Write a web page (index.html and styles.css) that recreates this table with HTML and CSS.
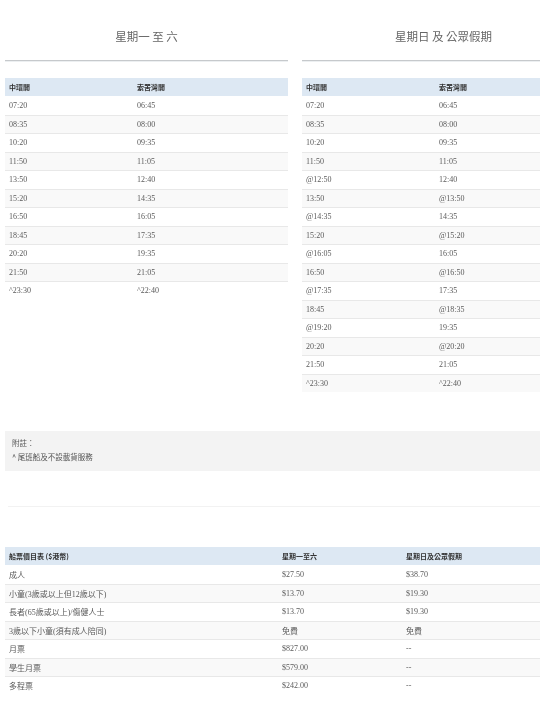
FILE: index.html
```html
<!DOCTYPE html>
<html lang="zh-Hant">
<head>
<meta charset="utf-8">
<title>船期表</title>
<link rel="stylesheet" href="styles.css">
</head>
<body>
<div class="frame">
<div class="page">
  <div class="schedules">
    <section class="sched">
      <h2 class="sched-title"><span>星期一 至 六</span></h2>
      <div class="tbl tbl-left">
        <div class="row head"><span class="c1">中環開</span><span>索罟灣開</span></div>
        <div class="row"><span class="c1">07:20</span><span>06:45</span></div>
        <div class="row"><span class="c1">08:35</span><span>08:00</span></div>
        <div class="row"><span class="c1">10:20</span><span>09:35</span></div>
        <div class="row"><span class="c1">11:50</span><span>11:05</span></div>
        <div class="row"><span class="c1">13:50</span><span>12:40</span></div>
        <div class="row"><span class="c1">15:20</span><span>14:35</span></div>
        <div class="row"><span class="c1">16:50</span><span>16:05</span></div>
        <div class="row"><span class="c1">18:45</span><span>17:35</span></div>
        <div class="row"><span class="c1">20:20</span><span>19:35</span></div>
        <div class="row"><span class="c1">21:50</span><span>21:05</span></div>
        <div class="row"><span class="c1">^23:30</span><span>^22:40</span></div>
      </div>
    </section>
    <section class="sched">
      <h2 class="sched-title"><span>星期日 及 公眾假期</span></h2>
      <div class="tbl tbl-right">
        <div class="row head"><span class="c1">中環開</span><span>索罟灣開</span></div>
        <div class="row"><span class="c1">07:20</span><span>06:45</span></div>
        <div class="row"><span class="c1">08:35</span><span>08:00</span></div>
        <div class="row"><span class="c1">10:20</span><span>09:35</span></div>
        <div class="row"><span class="c1">11:50</span><span>11:05</span></div>
        <div class="row"><span class="c1">@12:50</span><span>12:40</span></div>
        <div class="row"><span class="c1">13:50</span><span>@13:50</span></div>
        <div class="row"><span class="c1">@14:35</span><span>14:35</span></div>
        <div class="row"><span class="c1">15:20</span><span>@15:20</span></div>
        <div class="row"><span class="c1">@16:05</span><span>16:05</span></div>
        <div class="row"><span class="c1">16:50</span><span>@16:50</span></div>
        <div class="row"><span class="c1">@17:35</span><span>17:35</span></div>
        <div class="row"><span class="c1">18:45</span><span>@18:35</span></div>
        <div class="row"><span class="c1">@19:20</span><span>19:35</span></div>
        <div class="row"><span class="c1">20:20</span><span>@20:20</span></div>
        <div class="row"><span class="c1">21:50</span><span>21:05</span></div>
        <div class="row"><span class="c1">^23:30</span><span>^22:40</span></div>
      </div>
    </section>
  </div>

  <div class="note">
    <p>附註：</p>
    <p>^ 尾班船及不設載貨服務</p>
  </div>

  <hr class="divider">

  <div class="tbl fares">
    <div class="row head"><span class="f1">船票價目表 ($港幣)</span><span class="f2">星期一至六</span><span>星期日及公眾假期</span></div>
    <div class="row"><span class="f1">成人</span><span class="f2">$27.50</span><span>$38.70</span></div>
    <div class="row"><span class="f1">小童(3歲或以上但12歲以下)</span><span class="f2">$13.70</span><span>$19.30</span></div>
    <div class="row"><span class="f1">長者(65歲或以上)/傷健人士</span><span class="f2">$13.70</span><span>$19.30</span></div>
    <div class="row"><span class="f1">3歲以下小童(須有成人陪同)</span><span class="f2">免費</span><span>免費</span></div>
    <div class="row"><span class="f1">月票</span><span class="f2">$827.00</span><span>--</span></div>
    <div class="row"><span class="f1">學生月票</span><span class="f2">$579.00</span><span>--</span></div>
    <div class="row"><span class="f1">多程票</span><span class="f2">$242.00</span><span>--</span></div>
  </div>
</div>
</div>
</body>
</html>
```

FILE: styles.css
```css
html, body {
  margin: 0;
  padding: 0;
  background: #fff;
}

body {
  font-family: "Liberation Serif", "Noto Sans CJK TC", serif;
  color: #555;
}

.frame {
  width: 540px;
  overflow: hidden;
}

.page {
  width: 581px;
  margin-left: 5px;
}

.schedules {
  display: grid;
  grid-template-columns: 283px 283px;
  column-gap: 14px;
  align-items: start;
}

.sched-title {
  margin: 0;
  padding: 28px 0 16px;
  font-family: "Noto Sans CJK TC", sans-serif;
  font-weight: 400;
  font-size: 11.5px;
  line-height: 16px;
  color: #666;
  text-align: center;
  border-bottom: 1px solid #c6c9cc;
  box-shadow: 0 1px 0 #eceff1;
}

.sched-title span {
  display: inline-block;
  filter: grayscale(1);
}

.tbl {
  margin-top: 17px;
  font-size: 8px;
}

.row {
  display: flex;
  align-items: center;
  height: 18.5px;
  box-sizing: border-box;
  border-top: 1px solid #e8e8e8;
  padding-left: 4px;
  color: #5a5a5a;
  white-space: nowrap;
}

.row > span,
.note p {
  display: block;
  filter: grayscale(1);
}

.row:nth-child(odd) {
  background: #f9f9f9;
}

.row.head {
  height: 18px;
  border-top: 0;
  background: #dde8f3;
  color: #333;
  font-family: "Noto Sans CJK TC", sans-serif;
  font-weight: 700;
  font-size: 7px;
}

.row.head + .row {
  border-top: 0;
}

.tbl-left .c1 {
  width: 128px;
}

.tbl-right .c1 {
  width: 133px;
}

.note {
  margin-top: 39px;
  height: 40px;
  box-sizing: border-box;
  padding: 5px 7px;
  background: #f3f3f3;
  font-family: "Noto Sans CJK TC", sans-serif;
  font-size: 7.5px;
  line-height: 14px;
  color: #555;
}

.note p {
  margin: 0;
}

.divider {
  margin: 35px 0 0 3px;
  border: 0;
  border-top: 1px solid #f2f2f2;
  height: 0;
}

.fares {
  margin-top: 40px;
}

.fares .row {
  font-family: "Liberation Serif", "Noto Sans CJK TC", serif;
  font-size: 8px;
}

.fares .row.head {
  font-family: "Noto Sans CJK TC", sans-serif;
  font-size: 7px;
}

.fares .f1 {
  width: 273px;
}

.fares .f2 {
  width: 124px;
}
```
